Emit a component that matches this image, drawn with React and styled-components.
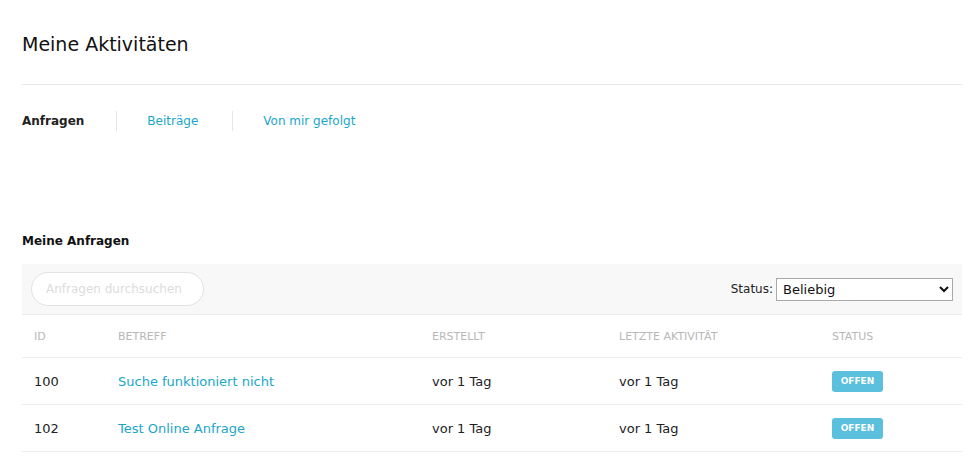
import React from 'react'
import styled, { createGlobalStyle } from 'styled-components'

const GlobalStyle = createGlobalStyle`
  body {
    margin: 0;
    background: #fff;
    font-family: "DejaVu Sans", Verdana, sans-serif;
    color: #222;
  }
`

const requests = [
  { id: 100, subject: 'Suche funktioniert nicht', created: 'vor 1 Tag', last: 'vor 1 Tag', status: 'OFFEN' },
  { id: 102, subject: 'Test Online Anfrage', created: 'vor 1 Tag', last: 'vor 1 Tag', status: 'OFFEN' },
]

function App() {
  return (
    <Page>
      <GlobalStyle />
      <Title>Meine Aktivitäten</Title>
      <Tabs>
        <Tab active>Anfragen</Tab>
        <Tab>Beiträge</Tab>
        <Tab>Von mir gefolgt</Tab>
      </Tabs>

      <SectionTitle>Meine Anfragen</SectionTitle>
      <Toolbar>
        <Search placeholder="Anfragen durchsuchen" />
        <Filter>
          Status:
          <Select defaultValue="any">
            <option value="any">Beliebig</option>
          </Select>
        </Filter>
      </Toolbar>

      <Table>
        <colgroup>
          <col style={{ width: 84 }} />
          <col style={{ width: 314 }} />
          <col style={{ width: 187 }} />
          <col style={{ width: 213 }} />
          <col />
        </colgroup>
        <thead>
          <tr>
            <Th>ID</Th>
            <Th>Betreff</Th>
            <Th>Erstellt</Th>
            <Th>Letzte Aktivität</Th>
            <Th>Status</Th>
          </tr>
        </thead>
        <tbody>
          {requests.map(r => (
            <tr key={r.id}>
              <Td>{r.id}</Td>
              <Td><Link href="#">{r.subject}</Link></Td>
              <Td>{r.created}</Td>
              <Td>{r.last}</Td>
              <Td><Badge>{r.status}</Badge></Td>
            </tr>
          ))}
        </tbody>
      </Table>
    </Page>
  )
}

export default App

const Page = styled.div`
padding: 0 15px 0 22px;
width: 940px;
`

const Title = styled.h1`
margin: 0;
padding: 30px 0 26px;
font-size: 19px;
font-weight: normal;
color: #111;
line-height: 28px;
border-bottom: 1px solid #e8e8e8;
`

const Tabs = styled.div`
display: flex;
align-items: center;
margin-top: 26px;
`

const Tab = styled.a`
font-size: 12px;
line-height: 20px;
font-weight: ${p => (p.active ? 'bold' : 'normal')};
color: ${p => (p.active ? '#222' : '#1aa6c8')};
padding: 0 34px 0 30px;
border-left: 1px solid #e6e6e6;
cursor: pointer;
&:first-child{
    padding-left: 0;
    padding-right: 32px;
    border-left: none;
}
`

const SectionTitle = styled.h2`
margin: 100px 0 13px;
font-size: 12px;
line-height: 20px;
font-weight: bold;
color: #111;
`

const Toolbar = styled.div`
display: flex;
align-items: center;
justify-content: space-between;
height: 50px;
padding: 0 9px;
background: #f8f8f8;
border-bottom: 1px solid #ececec;
`

const Search = styled.input`
width: 173px;
height: 34px;
box-sizing: border-box;
border: 1px solid #e2e2e2;
border-radius: 17px;
padding: 0 14px;
font-family: inherit;
font-size: 12px;
background: #fff;
outline: none;
&::placeholder{
    color: #dcdcdc;
}
`

const Filter = styled.label`
display: flex;
align-items: center;
gap: 3px;
font-size: 12px;
color: #222;
`

const Select = styled.select`
width: 177px;
height: 23px;
font-family: inherit;
font-size: 13px;
color: #111;
border: 1px solid #a9a9a9;
background: #fff;
padding: 0 2px;
`

const Table = styled.table`
width: 940px;
border-collapse: collapse;
table-layout: fixed;
`

const Th = styled.th`
text-align: left;
font-weight: normal;
font-size: 11px;
text-transform: uppercase;
color: #b8b8b8;
height: 41px;
padding: 1px 12px 0;
border-bottom: 1px solid #ececec;
`

const Td = styled.td`
font-size: 13px;
color: #222;
height: 46px;
padding: 0 12px;
border-bottom: 1px solid #ececec;
`

const Link = styled.a`
color: #1aa6c8;
text-decoration: none;
`

const Badge = styled.span`
display: inline-block;
width: 51px;
height: 21px;
line-height: 21px;
text-align: center;
border-radius: 3px;
background: #5bc0de;
color: #fff;
font-size: 9px;
font-weight: bold;
`
